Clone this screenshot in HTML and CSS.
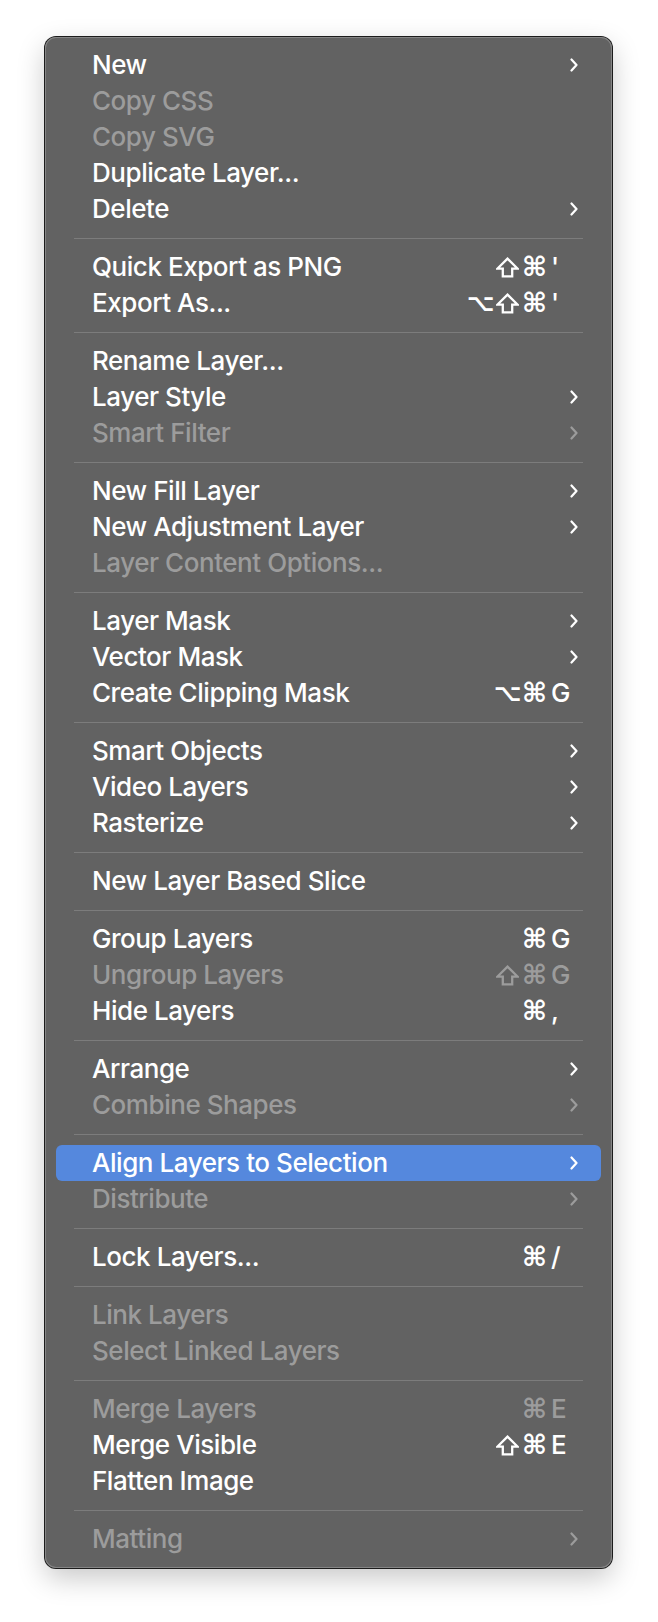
FILE: index.html
```html
<!DOCTYPE html>
<html lang="en">
<head>
    <meta charset="UTF-8">
    <title>Layer Context Menu</title>
    <link rel="stylesheet" href="styles.css">
</head>
<body>
    <div class="menu">
        <div class="item"><span class="label">New</span><svg class="chev" viewBox="0 0 8 14"><polyline points="1.5,1.5 6.5,7 1.5,12.5"/></svg></div>
        <div class="item off"><span class="label">Copy CSS</span></div>
        <div class="item off"><span class="label">Copy SVG</span></div>
        <div class="item"><span class="label">Duplicate Layer...</span></div>
        <div class="item"><span class="label">Delete</span><svg class="chev" viewBox="0 0 8 14"><polyline points="1.5,1.5 6.5,7 1.5,12.5"/></svg></div>
        <div class="sep"></div>
        <div class="item"><span class="label">Quick Export as PNG</span><span class="keys"><svg class="mod shift" viewBox="0 0 22 20"><polygon points="11,1.5 20.5,11 15.5,11 15.5,18.5 6.5,18.5 6.5,11 1.5,11"/></svg><span class="mod">⌘</span><span class="key">'</span></span></div>
        <div class="item"><span class="label">Export As...</span><span class="keys"><span class="mod opt">⌥</span><svg class="mod shift" viewBox="0 0 22 20"><polygon points="11,1.5 20.5,11 15.5,11 15.5,18.5 6.5,18.5 6.5,11 1.5,11"/></svg><span class="mod">⌘</span><span class="key">'</span></span></div>
        <div class="sep"></div>
        <div class="item"><span class="label">Rename Layer...</span></div>
        <div class="item"><span class="label">Layer Style</span><svg class="chev" viewBox="0 0 8 14"><polyline points="1.5,1.5 6.5,7 1.5,12.5"/></svg></div>
        <div class="item off"><span class="label">Smart Filter</span><svg class="chev" viewBox="0 0 8 14"><polyline points="1.5,1.5 6.5,7 1.5,12.5"/></svg></div>
        <div class="sep"></div>
        <div class="item"><span class="label">New Fill Layer</span><svg class="chev" viewBox="0 0 8 14"><polyline points="1.5,1.5 6.5,7 1.5,12.5"/></svg></div>
        <div class="item"><span class="label">New Adjustment Layer</span><svg class="chev" viewBox="0 0 8 14"><polyline points="1.5,1.5 6.5,7 1.5,12.5"/></svg></div>
        <div class="item off"><span class="label">Layer Content Options...</span></div>
        <div class="sep"></div>
        <div class="item"><span class="label">Layer Mask</span><svg class="chev" viewBox="0 0 8 14"><polyline points="1.5,1.5 6.5,7 1.5,12.5"/></svg></div>
        <div class="item"><span class="label">Vector Mask</span><svg class="chev" viewBox="0 0 8 14"><polyline points="1.5,1.5 6.5,7 1.5,12.5"/></svg></div>
        <div class="item"><span class="label">Create Clipping Mask</span><span class="keys"><span class="mod opt">⌥</span><span class="mod">⌘</span><span class="key">G</span></span></div>
        <div class="sep"></div>
        <div class="item"><span class="label">Smart Objects</span><svg class="chev" viewBox="0 0 8 14"><polyline points="1.5,1.5 6.5,7 1.5,12.5"/></svg></div>
        <div class="item"><span class="label">Video Layers</span><svg class="chev" viewBox="0 0 8 14"><polyline points="1.5,1.5 6.5,7 1.5,12.5"/></svg></div>
        <div class="item"><span class="label">Rasterize</span><svg class="chev" viewBox="0 0 8 14"><polyline points="1.5,1.5 6.5,7 1.5,12.5"/></svg></div>
        <div class="sep"></div>
        <div class="item"><span class="label">New Layer Based Slice</span></div>
        <div class="sep"></div>
        <div class="item"><span class="label">Group Layers</span><span class="keys"><span class="mod">⌘</span><span class="key">G</span></span></div>
        <div class="item off"><span class="label">Ungroup Layers</span><span class="keys"><svg class="mod shift" viewBox="0 0 22 20"><polygon points="11,1.5 20.5,11 15.5,11 15.5,18.5 6.5,18.5 6.5,11 1.5,11"/></svg><span class="mod">⌘</span><span class="key">G</span></span></div>
        <div class="item"><span class="label">Hide Layers</span><span class="keys"><span class="mod">⌘</span><span class="key">,</span></span></div>
        <div class="sep"></div>
        <div class="item"><span class="label">Arrange</span><svg class="chev" viewBox="0 0 8 14"><polyline points="1.5,1.5 6.5,7 1.5,12.5"/></svg></div>
        <div class="item off"><span class="label">Combine Shapes</span><svg class="chev" viewBox="0 0 8 14"><polyline points="1.5,1.5 6.5,7 1.5,12.5"/></svg></div>
        <div class="sep"></div>
        <div class="item active"><span class="label">Align Layers to Selection</span><svg class="chev" viewBox="0 0 8 14"><polyline points="1.5,1.5 6.5,7 1.5,12.5"/></svg></div>
        <div class="item off"><span class="label">Distribute</span><svg class="chev" viewBox="0 0 8 14"><polyline points="1.5,1.5 6.5,7 1.5,12.5"/></svg></div>
        <div class="sep"></div>
        <div class="item"><span class="label">Lock Layers...</span><span class="keys"><span class="mod">⌘</span><span class="key">/</span></span></div>
        <div class="sep"></div>
        <div class="item off"><span class="label">Link Layers</span></div>
        <div class="item off"><span class="label">Select Linked Layers</span></div>
        <div class="sep"></div>
        <div class="item off"><span class="label">Merge Layers</span><span class="keys"><span class="mod">⌘</span><span class="key">E</span></span></div>
        <div class="item"><span class="label">Merge Visible</span><span class="keys"><svg class="mod shift" viewBox="0 0 22 20"><polygon points="11,1.5 20.5,11 15.5,11 15.5,18.5 6.5,18.5 6.5,11 1.5,11"/></svg><span class="mod">⌘</span><span class="key">E</span></span></div>
        <div class="item"><span class="label">Flatten Image</span></div>
        <div class="sep"></div>
        <div class="item off"><span class="label">Matting</span><svg class="chev" viewBox="0 0 8 14"><polyline points="1.5,1.5 6.5,7 1.5,12.5"/></svg></div>
    </div>
</body>
</html>
```

FILE: styles.css
```css
body {
    margin: 0;
    background-color: #ffffff;
    font-family: Inter, "DejaVu Sans", sans-serif;
    height: 1622px;
}

.menu {
    box-sizing: border-box;
    width: 567px;
    height: 1531px;
    margin: 37px 0 0 45px;
    padding: 10px 11px 11px 11px;
    background-color: #626262;
    border-radius: 11px;
    box-shadow: 0 0 0 1px #1c1c1c, inset 0 0 0 1px #858585, 0 10px 28px rgba(0, 0, 0, 0.22);
}

.item {
    display: flex;
    align-items: center;
    height: 36px;
    padding: 0 23px 0 36px;
    border-radius: 6px;
    color: #ffffff;
    font-size: 26px;
    font-weight: 500;
    letter-spacing: -0.45px;
    line-height: 36px;
}

.item.off {
    color: #9c9c9c;
}

.item.active {
    background-color: #5588dd;
}

.label {
    flex: 1;
    white-space: nowrap;
}

.chev {
    width: 8px;
    height: 14px;
    fill: none;
    stroke: currentColor;
    stroke-width: 2.2;
    stroke-linecap: round;
    stroke-linejoin: round;
}

.keys {
    display: flex;
    align-items: center;
}

.mod {
    display: flex;
    justify-content: center;
    width: 23px;
    margin-left: 4px;
    font-family: "DejaVu Sans", sans-serif;
    font-size: 27px;
    font-weight: bold;
    letter-spacing: 0;
}

.mod.opt {
    font-size: 24px;
}

.shift {
    height: 21px;
    fill: none;
    stroke: currentColor;
    stroke-width: 2.2;
    stroke-linejoin: miter;
}

.key {
    width: 32px;
    padding-left: 5px;
    box-sizing: border-box;
    letter-spacing: 0;
}

.sep {
    height: 1px;
    margin: 11px 18px 10px 18px;
    background-color: #7c7c7c;
}
```
